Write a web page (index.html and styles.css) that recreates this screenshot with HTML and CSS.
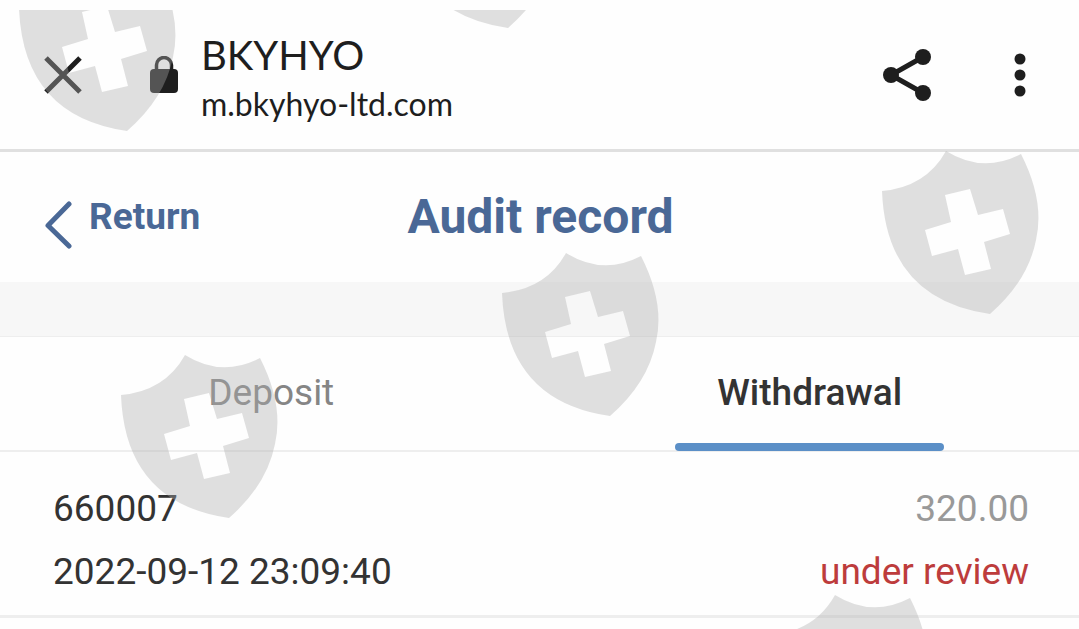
FILE: index.html
```html
<!DOCTYPE html>
<html lang="en">
<head>
<meta charset="utf-8">
<meta name="viewport" content="width=device-width, initial-scale=1">
<title>Audit record</title>
<link rel="stylesheet" href="styles.css">
</head>
<body>
<header class="browser-bar">
  <button class="icon-button" type="button" aria-label="Close">
    <svg width="38" height="38" viewBox="0 0 38 38"><path d="M2 2 36 36M36 2 2 36" fill="none" stroke="#1e1e1e" stroke-width="5"/></svg>
  </button>
  <svg class="lock" width="30" height="38" viewBox="0 0 30 38" aria-hidden="true">
    <path d="M7.500 15V9a7.500 7.500 0 0 1 15 0v6" fill="none" stroke="#1e1e1e" stroke-width="3.500"/>
    <rect x="1" y="13" width="28" height="24" rx="4" fill="#1e1e1e"/>
  </svg>
  <div class="site">
    <div class="site-name">BKYHYO</div>
    <div class="site-url">m.bkyhyo-ltd.com</div>
  </div>
  <button class="icon-button" type="button" aria-label="Share">
    <svg width="48" height="54" viewBox="0 0 48 54"><path d="M40 9 8 27 40 45" fill="none" stroke="#1e1e1e" stroke-width="5"/><g fill="#1e1e1e"><circle cx="40" cy="9" r="8"/><circle cx="8" cy="27" r="8"/><circle cx="40" cy="45" r="8"/></g></svg>
  </button>
  <button class="icon-button more" type="button" aria-label="More">
    <svg width="12" height="44" viewBox="0 0 12 44" fill="#1e1e1e"><circle cx="6" cy="6" r="5.500"/><circle cx="6" cy="22" r="5.500"/><circle cx="6" cy="38" r="5.500"/></svg>
  </button>
</header>
<main>
  <div class="title-bar">
    <a class="back" href="#">
      <svg class="chevron" width="28" height="50" viewBox="0 0 28 50" aria-hidden="true"><path d="M25 4 4 25.500 25 46" fill="none" stroke="#4a6896" stroke-width="5" stroke-linecap="round" stroke-linejoin="round"/></svg>
      <span>Return</span>
    </a>
    <h1 class="title">Audit record</h1>
  </div>
  <div class="band"></div>
  <nav class="tabs">
    <button class="tab" type="button">Deposit</button>
    <button class="tab tab-active" type="button">Withdrawal</button>
  </nav>
  <section class="record">
    <div class="row"><span>660007</span><span class="amount">320.00</span></div>
    <div class="row"><time>2022-09-12 23:09:40</time><span class="status">under review</span></div>
  </section>
</main>
<div class="watermark" aria-hidden="true">
  <svg class="watermark-art" width="100%" height="100%">
    <defs>
      <path id="shield" fill-rule="evenodd" d="M2 43Q46 39 66 3Q103 26 141 6Q165 53 156 92Q148 133 110 166Q6 151 2 43ZM65 47 71 74 45 82 52 108 78 101 85 127 111 121 104 94 130 86 123 61 98 67 90 41Z"/>
    </defs>
    <use href="#shield" x="17" y="-45"/>
    <use href="#shield" x="398" y="-148"/>
    <use href="#shield" x="880" y="138"/>
    <use href="#shield" x="500" y="240"/>
    <use href="#shield" x="119" y="342"/>
    <use href="#shield" x="769" y="582"/>
  </svg>
</div>
</body>
</html>
```
FILE: styles.css
```css
* { box-sizing: border-box; }
body {
  margin: 0;
  background: #fefefe;
  color: #333;
  font-family: Roboto, sans-serif;
  font-size: 37px;
  line-height: 44px;
  overflow: hidden;
}
svg { display: block; }
button {
  padding: 0;
  border: 0;
  background: none;
  color: inherit;
  font: inherit;
}
.browser-bar {
  display: flex;
  align-items: center;
  min-height: 152px;
  padding: 0 53px 0 44px;
  border-bottom: 3px solid #e0e0e0;
  color: #1e1e1e;
}
.lock { margin: 0 22px 0 67px; }
.site {
  flex: 1;
  padding-top: 8px;
  font-family: Lato, sans-serif;
}
.site-name { font-size: 40px; line-height: 50px; }
.site-url { font-size: 32px; line-height: 48px; }
.more { margin-left: 83px; }
.title-bar {
  display: grid;
  grid-template-columns: 1fr auto 1fr;
  align-items: center;
  min-height: 130px;
  padding: 0 42px 0 44px;
  color: #4a6896;
  font-weight: 700;
}
.back {
  display: flex;
  align-items: center;
  gap: 17px;
  color: inherit;
  text-decoration: none;
}
.chevron { margin-top: 16px; }
.title {
  margin: 0;
  font-size: 48px;
  line-height: 56px;
}
.band {
  height: 55px;
  border-bottom: 1px solid #eee;
  background: #f7f7f7;
}
.tabs {
  display: grid;
  grid-template-columns: 1fr 1fr;
  padding-left: 2px;
  border-bottom: 2px solid #eee;
}
.tab {
  position: relative;
  padding: 34px 0 35px;
  color: #858585;
}
.tab-active { color: #333; font-weight: 500; }
.tab-active::after {
  content: "";
  position: absolute;
  right: 25%;
  bottom: -1px;
  left: 25%;
  height: 8px;
  border-radius: 4px;
  background: #5b8fc7;
}
.record {
  padding: 35px 50px 21px 53px;
  border-bottom: 3px solid #eee;
}
.row { display: flex; justify-content: space-between; }
.row + .row { margin-top: 19px; }
.amount { color: #999; }
.status { color: #bd3c3c; }
.watermark {
  position: absolute;
  inset: 10px 0 0;
  overflow: hidden;
  pointer-events: none;
}
.watermark-art { fill: #aeaeae; fill-opacity: 0.38; }
```
